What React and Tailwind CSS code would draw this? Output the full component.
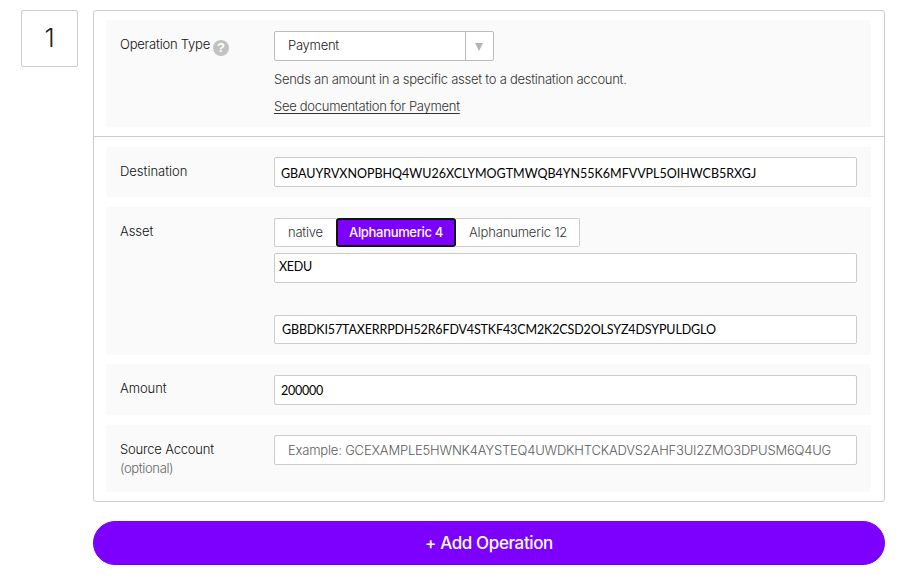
import React from "react";

function Panel({ label, optional, help, className, children }) {
  return (
    <div className={`ml-3 mr-[13px] flex rounded-[2px] bg-[#fafafa] pl-[14px] ${className}`}>
      <div className="w-[154px] shrink-0 pt-[15px] leading-[19px] text-[#111]">
        <div className="flex">
          {label}
          {help}
        </div>
        {optional}
      </div>
      {children}
    </div>
  );
}

function Field({ className, children }) {
  return (
    <div className={`flex w-[583px] items-center rounded-[2px] border border-[#ccc] bg-white whitespace-nowrap ${className}`}>
      {children}
    </div>
  );
}

const typed = "font-['Lato',sans-serif] text-[12.5px] leading-[18px] font-normal text-black";

export default function App() {
  return (
    <div className="flex h-[581px] w-[905px] items-start overflow-hidden bg-white pt-[10px] pl-[21px] font-['Inter',sans-serif] text-[13px] leading-[19px] font-light text-[#222]">
      <div className="flex size-[57px] items-center justify-center rounded-[2px] border border-[#ccc] text-[26px] font-light">
        <span className="relative -top-px">1</span>
      </div>

      <div className="ml-[15px] w-[792px]">
        <div className="h-[492px] rounded-[3px] border border-[#ccc] pt-[9px]">
          <Panel
            className="h-[107px]"
            label={<span className="w-[90px] tracking-[-0.21px] whitespace-nowrap">Operation Type</span>}
            help={
              <span className="mt-[5px] ml-[3px] flex size-4 items-center justify-center rounded-full bg-[#c2c2c2] font-['Liberation_Sans',sans-serif] text-[13px] leading-4 font-bold text-white">
                ?
              </span>
            }
          >
            <div className="pt-[11px]">
              <div className="flex h-[30px] w-[220px] rounded-[2px] border border-[#bbb] bg-white">
                <div className="flex-1 pt-[4px] pl-[13px] tracking-[-0.25px]">Payment</div>
                <div className="flex w-[28px] items-center justify-center border-l border-[#bbb] pt-px">
                  <svg width="8" height="8" viewBox="0 0 8 8" className="-ml-px fill-[#b5b5b5]">
                    <path d="M0 0H8L4 8Z" />
                  </svg>
                </div>
              </div>
              <p className="mt-[9px] tracking-[-0.26px] text-[#333]">
                Sends an amount in a specific asset to a destination account.
              </p>
              <p className="mt-[8px] tracking-[-0.28px] text-[#333]">
                <a className="underline decoration-1 underline-offset-2 [text-decoration-skip-ink:none]">
                  See documentation for Payment
                </a>
              </p>
            </div>
          </Panel>

          <div className="mt-[9px] mb-[10px] h-px bg-[#ccc]" />

          <Panel className="h-[50px]" label={<span className="tracking-[-0.01px]">Destination</span>}>
            <Field className="mt-[10px] h-[30px] pt-[3px] pl-[6px]">
              <span className={`${typed} tracking-[-0.01px]`}>
                GBAUYRVXNOPBHQ4WU26XCLYMOGTMWQB4YN55K6MFVVPL5OIHWCB5RXGJ
              </span>
            </Field>
          </Panel>

          <Panel className="mt-[10px] h-[148px]" label={<span className="tracking-[-0.08px]">Asset</span>}>
            <div className="pt-[11px]">
              <div className="flex h-[29px] text-[#333]">
                <div className="w-[62px] rounded-l-[2px] border border-r-0 border-[#ccc] bg-white pt-[4px] pl-[13px] tracking-[-0.22px]">
                  native
                </div>
                <div className="w-[120px] rounded-[3px] border-2 border-[#111] bg-[#7d00ff] pt-[3px] pl-[11px] font-medium tracking-[-0.32px] text-white">
                  Alphanumeric 4
                </div>
                <div className="w-[124px] rounded-r-[2px] border border-l-0 border-[#ccc] bg-white pt-[4px] pl-[13px] tracking-[-0.15px]">
                  Alphanumeric 12
                </div>
              </div>
              <Field className="mt-[6px] h-[30px] pb-[2px] pl-[4px]">
                <span className={`${typed} tracking-[-0.25px]`}>XEDU</span>
              </Field>
              <Field className="mt-[32px] h-[29px] pl-[7px]">
                <span className={`${typed} tracking-[-0.13px]`}>
                  GBBDKI57TAXERRPDH52R6FDV4STKF43CM2K2CSD2OLSYZ4DSYPULDGLO
                </span>
              </Field>
            </div>
          </Panel>

          <Panel className="mt-[9px] h-[51px]" label={<span className="tracking-[-0.07px]">Amount</span>}>
            <Field className="mt-[11px] h-[30px] pt-px pl-[6px]">
              <span className={`${typed} tracking-[-0.24px]`}>200000</span>
            </Field>
          </Panel>

          <Panel
            className="mt-[10px] h-[67px]"
            label={<span className="tracking-[-0.19px]">Source Account</span>}
            optional={<div className="tracking-[-0.36px] text-[#666]">(optional)</div>}
          >
            <Field className="mt-[10px] h-[30px] pt-px pl-[13px]">
              <span className="tracking-[-0.19px] text-[#5c5c5c]">
                Example: GCEXAMPLE5HWNK4AYSTEQ4UWDKHTCKADVS2AHF3UI2ZMO3DPUSM6Q4UG
              </span>
            </Field>
          </Panel>
        </div>

        <button className="mt-[19px] flex h-[44px] w-full items-center justify-center rounded-full border border-[#7500f0] bg-[#7d00ff] text-[17px] font-medium tracking-[-0.38px] text-white">
          + Add Operation
        </button>
      </div>
    </div>
  );
}
